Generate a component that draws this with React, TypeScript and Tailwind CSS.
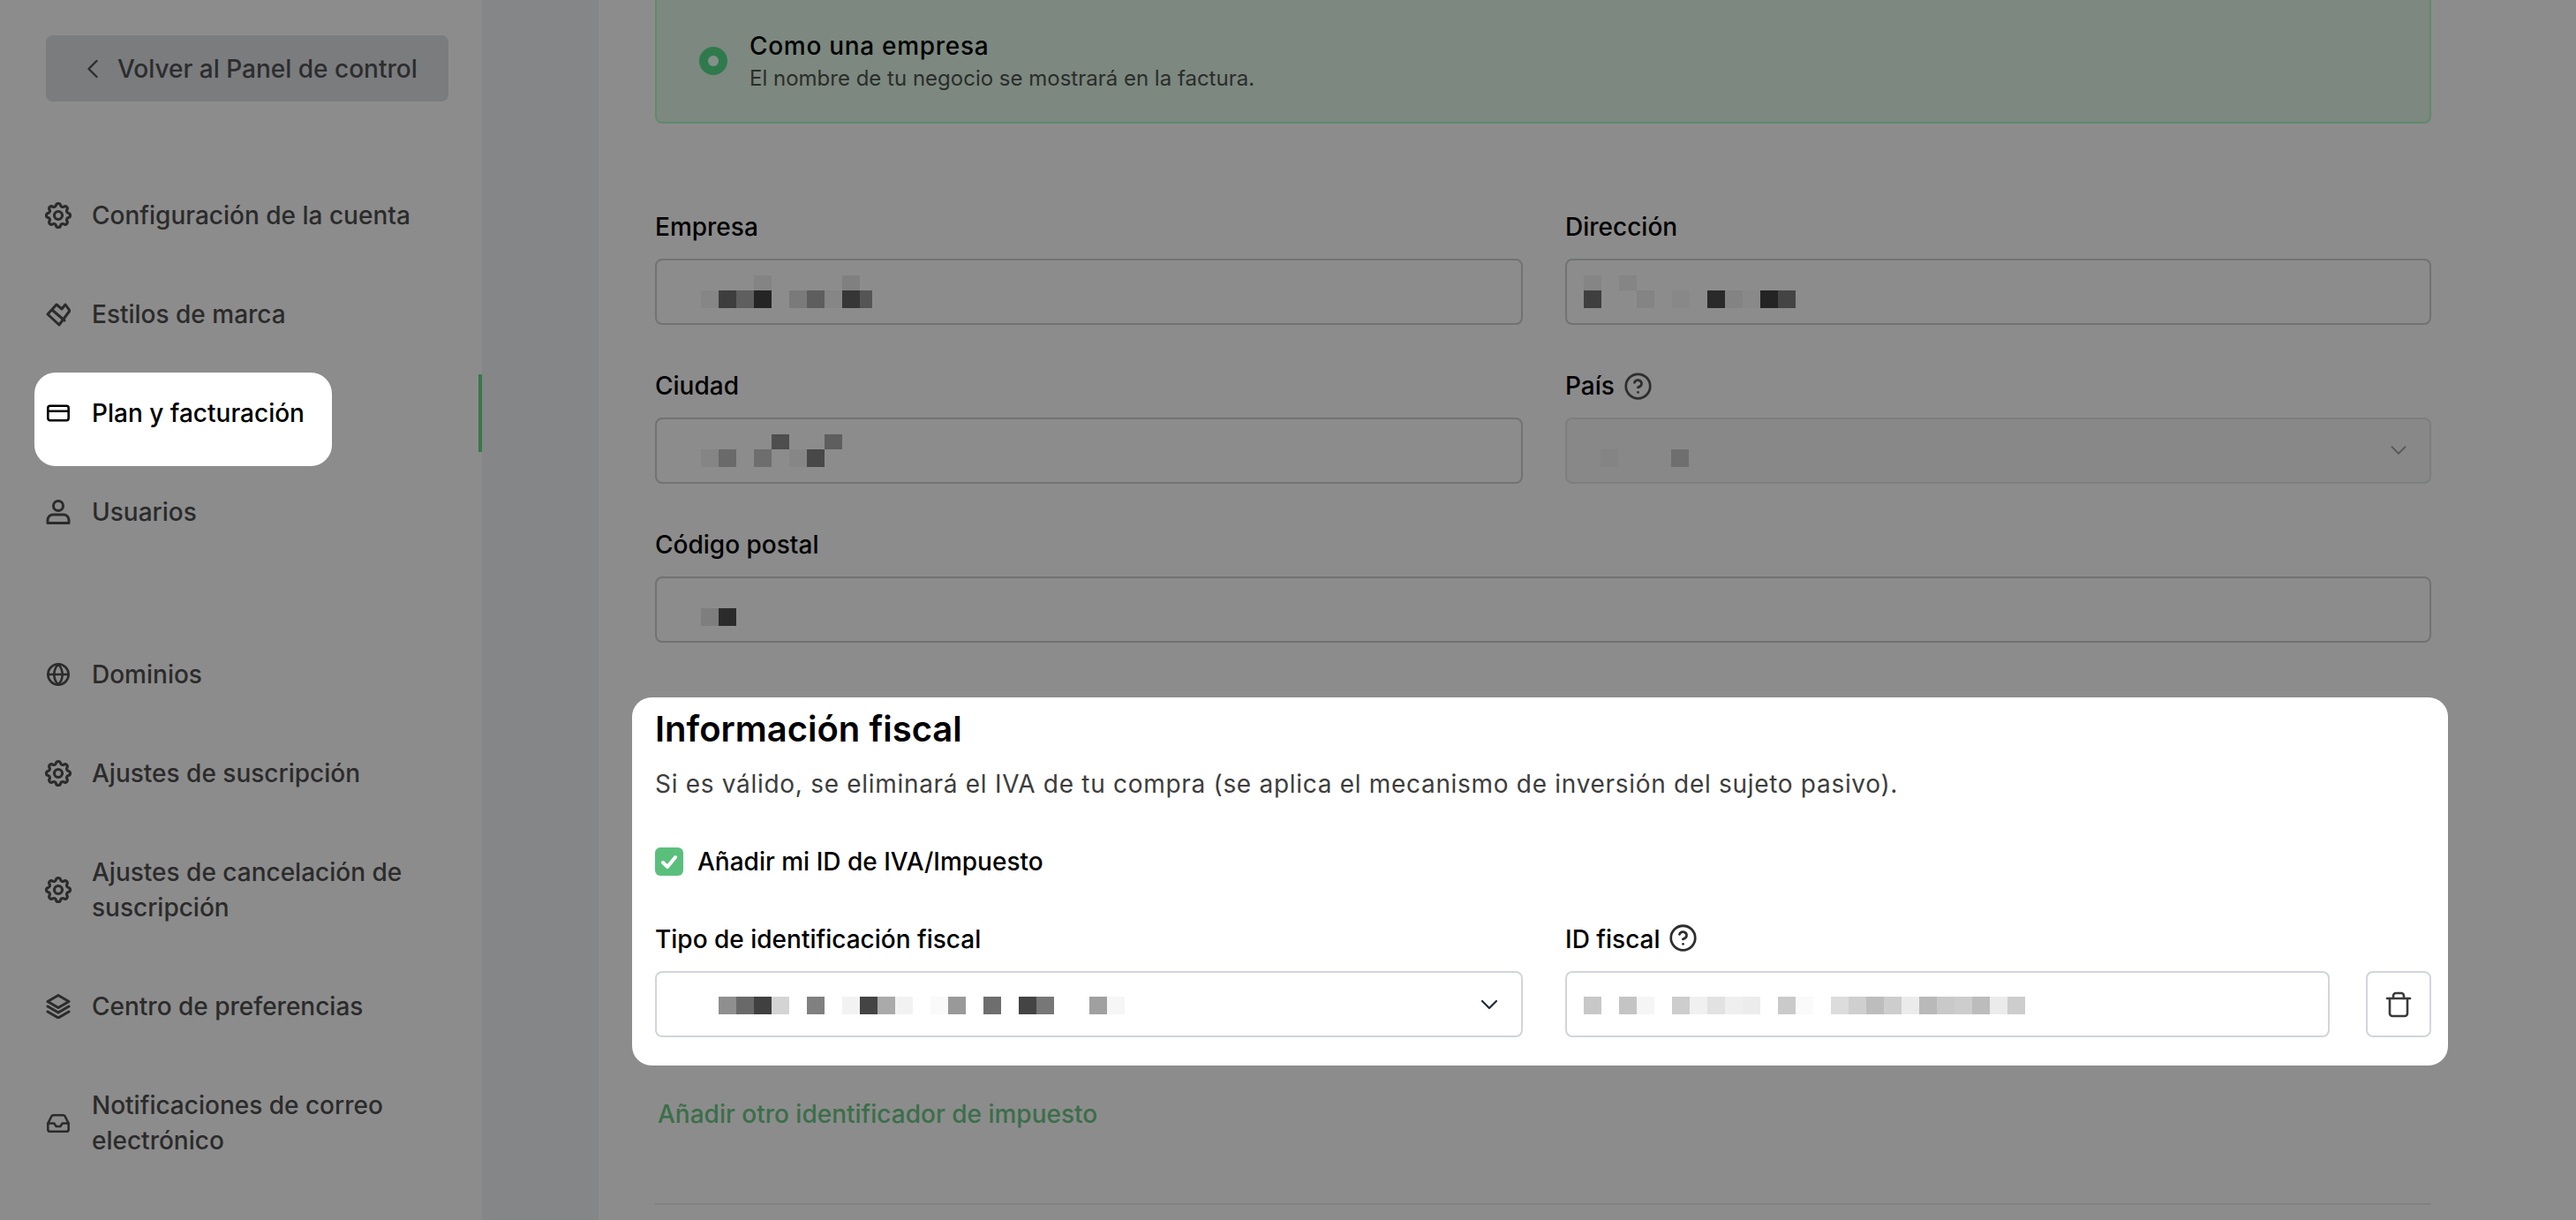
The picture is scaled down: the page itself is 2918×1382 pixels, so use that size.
import { ChevronDown, ChevronLeft, CircleHelp, CreditCard, Globe, Inbox } from "lucide-react";
import { TbSettings } from "react-icons/tb";
import type { ReactNode } from "react";

function Pixels({ rows, className }: { rows: string[][]; className: string }) {
  return (
    <div className={className}>
      {rows.map((row, i) => (
        <div key={i} className={i === rows.length - 1 ? "flex h-[20px]" : "flex h-[17px]"}>
          {row.map((c, j) => (
            <div key={j} className={"w-[20px] " + c} />
          ))}
        </div>
      ))}
    </div>
  );
}

function BrushIcon() {
  return (
    <svg viewBox="0 0 28 28" className="w-[28px] h-[28px]" fill="none" stroke="currentColor" strokeWidth="3" strokeLinejoin="round" strokeLinecap="round">
      <path d="M2 14 L12 3 L18 8 L22 3 L27 10 L15 26 Z" />
      <path d="M7 9 L21 21" />
    </svg>
  );
}

function UserIcon() {
  return (
    <svg viewBox="0 0 28 28" className="w-[28px] h-[28px]" fill="none" stroke="currentColor" strokeWidth="3" strokeLinejoin="round" strokeLinecap="round">
      <circle cx="14" cy="7" r="5.5" />
      <path d="M2 26.5 V23 a6 6 0 0 1 6 -6 h12 a6 6 0 0 1 6 6 v3.5 Z" />
    </svg>
  );
}

function StackIcon() {
  return (
    <svg viewBox="0 0 28 28" className="w-[28px] h-[28px]" fill="none" stroke="currentColor" strokeWidth="3" strokeLinejoin="round" strokeLinecap="round">
      <path d="M14 1.5 L26 8.5 L14 15.5 L2 8.5 Z" />
      <path d="M2 14 L14 21 L26 14" />
      <path d="M2 20 L14 27 L26 20" />
    </svg>
  );
}

function TrashIcon() {
  return (
    <svg viewBox="0 0 30 30" className="w-[30px] h-[30px]" fill="none" stroke="currentColor" strokeWidth="2.6" strokeLinejoin="round" strokeLinecap="round">
      <path d="M2 8 H28" />
      <path d="M9 8 V5 a3 3 0 0 1 3 -3 h6 a3 3 0 0 1 3 3 V8" />
      <path d="M5 8 V25 a3 3 0 0 0 3 3 h14 a3 3 0 0 0 3 -3 V8" />
    </svg>
  );
}

function NavItem({ icon, children, multi }: { icon: ReactNode; children: ReactNode; multi?: boolean }) {
  return (
    <div className="flex items-center gap-[24px] text-[#2b2b2b]">
      <div className="w-[28px] h-[28px] flex items-center justify-center shrink-0">{icon}</div>
      <span className={multi ? "w-[380px] leading-[40px]" : "leading-[40px]"}>{children}</span>
    </div>
  );
}

function Label({ children, className }: { children: ReactNode; className?: string }) {
  return <div className={"h-[36px] flex items-center text-[28px] font-medium text-black " + (className ?? "")}>{children}</div>;
}

const dimInput = "relative h-[75px] rounded-[8px] border-2 border-[#717273]";

export default function App() {
  const gear = <TbSettings size={36} strokeWidth={2.1} className="shrink-0" />;
  return (
    <div className="flex h-screen w-full overflow-hidden bg-[#8c8c8c] font-['Inter',sans-serif]">
      <aside className="relative w-[546px] shrink-0 pl-[52px] pt-[40px] text-[28px]">
        <div className="absolute right-0 top-[424px] h-[88px] w-[4px] bg-[#37784b]" />
        <div className="flex h-[75px] w-[456px] items-center rounded-[8px] bg-[#7b7c7e] pl-[35px] font-medium text-[#2c2d2e] text-[28px]">
          <ChevronLeft size={36} strokeWidth={1.6} className="mr-[10px]" />
          <span>Volver al Panel de control</span>
        </div>
        <nav className="mt-[109px] flex flex-col gap-[72px] font-medium">
          <NavItem icon={gear}>Configuración de la cuenta</NavItem>
          <NavItem icon={<BrushIcon />}>Estilos de marca</NavItem>
          <div className="-ml-[13px] -mt-[26px] -mb-[40px] h-[106px] w-[337px] rounded-[24px] bg-white pl-[13px] pt-[26px] text-black">
            <div className="flex items-center gap-[24px]">
              <div className="w-[28px] h-[28px] flex items-center justify-center shrink-0">
                <CreditCard size={34} strokeWidth={2.2} />
              </div>
              <span className="leading-[40px]">Plan y facturación</span>
            </div>
          </div>
          <NavItem icon={<UserIcon />}>Usuarios</NavItem>
          <div className="mt-[72px]">
            <NavItem icon={<Globe size={34} strokeWidth={2.2} />}>Dominios</NavItem>
          </div>
          <NavItem icon={gear}>Ajustes de suscripción</NavItem>
          <NavItem icon={gear} multi>Ajustes de cancelación de suscripción</NavItem>
          <NavItem icon={<StackIcon />}>Centro de preferencias</NavItem>
          <NavItem icon={<Inbox size={35} strokeWidth={2.2} />} multi>Notificaciones de correo electrónico</NavItem>
        </nav>
      </aside>

      <div className="w-[132px] shrink-0 bg-[#858687]" />

      <main className="flex-1 pl-[64px] pr-[164px]">
        <div className="flex h-[140px] items-center gap-[25px] rounded-b-[8px] border-x-2 border-b-2 border-[#5f8a6c] bg-[#7d8880] pl-[48px]">
          <div className="flex h-[32px] w-[32px] items-center justify-center rounded-full bg-[#2f7a4c]">
            <div className="h-[12px] w-[12px] rounded-full bg-[#84918a]" />
          </div>
          <div className="pt-[2px]">
            <div className="text-[28px] leading-[38px] font-medium tracking-[0.7px] text-black">Como una empresa</div>
            <div className="text-[24px] leading-[36px] text-[#2a2d2b]">El nombre de tu negocio se mostrará en la factura.</div>
          </div>
        </div>

        <div className="mt-[99px] grid grid-cols-[983px_981px] gap-x-[48px]">
          <div>
            <Label>Empresa</Label>
            <div className={"mt-[18px] " + dimInput}>
              <Pixels
                className="absolute left-[50px] top-[17px]"
                rows={[
                  ["", "", "", "bg-[#848484]", "", "", "", "", "bg-[#808080]", ""],
                  ["bg-[#868686]", "bg-[#3e3e3e]", "bg-[#5f5f5f]", "bg-[#252525]", "", "bg-[#7a7a7a]", "bg-[#5e5e5e]", "bg-[#868686]", "bg-[#363636]", "!w-[14px] bg-[#555555]"],
                ]}
              />
            </div>
          </div>
          <div>
            <Label>Dirección</Label>
            <div className={"mt-[18px] " + dimInput}>
              <Pixels
                className="absolute left-[19px] top-[17px]"
                rows={[
                  ["bg-[#858585]", "", "bg-[#858585]"],
                  ["bg-[#3f3f3f]", "", "", "bg-[#848484]", "", "bg-[#888888]", "", "bg-[#2a2a2a]", "bg-[#838383]", "bg-[#898989]", "bg-[#242424]", "bg-[#444444]"],
                ]}
              />
            </div>
          </div>

          <div className="mt-[51px]">
            <Label>Ciudad</Label>
            <div className={"mt-[18px] " + dimInput}>
              <Pixels
                className="absolute left-[50px] top-[17px]"
                rows={[
                  ["", "", "", "", "bg-[#4e4e4e]", "", "", "bg-[#5e5e5e]"],
                  ["bg-[#858585]", "bg-[#6a6a6a]", "", "bg-[#6e6e6e]", "", "bg-[#868686]", "bg-[#484848]", ""],
                ]}
              />
            </div>
          </div>
          <div className="mt-[51px]">
            <Label>
              País
              <CircleHelp size={33} strokeWidth={2} className="ml-[10px] text-[#2e2e2e]" />
            </Label>
            <div className="relative mt-[18px] h-[75px] rounded-[8px] border-2 border-[#7d7e7e] bg-[#888888]">
              <Pixels className="absolute left-[38px] top-[34px]" rows={[["bg-[#848484]", "", "", "", "bg-[#6f6f6f]"]]} />
              <ChevronDown size={30} strokeWidth={1.5} className="absolute right-[20px] top-[20px] text-[#5a5a5a]" />
            </div>
          </div>

          <div className="col-span-2 mt-[51px]">
            <Label>Código postal</Label>
            <div className={"mt-[18px] " + dimInput}>
              <Pixels className="absolute left-[50px] top-[34px]" rows={[["bg-[#7e7e7e]", "bg-[#2b2b2b]"]]} />
            </div>
          </div>
        </div>

        <section className="-ml-[26px] -mr-[19px] mt-[62px] h-[417px] rounded-[22px] bg-white pl-[26px] pr-[19px]">
          <h2 className="pt-[12px] text-[40px] leading-[48px] font-semibold text-black">Información fiscal</h2>
          <p className="mt-[18px] text-[28px] leading-[40px] tracking-[0.7px] text-[#3d3d3d]">
            Si es válido, se eliminará el IVA de tu compra (se aplica el mecanismo de inversión del sujeto pasivo).
          </p>
          <div className="mt-[52px] flex items-center gap-[16px]">
            <div className="flex h-[32px] w-[32px] items-center justify-center rounded-[6px] bg-[#5bbf7c]">
              <svg viewBox="0 0 32 32" className="h-[32px] w-[32px]" fill="none" stroke="white" strokeWidth="4" strokeLinecap="round" strokeLinejoin="round">
                <path d="M9 17 L14 22 L23 11" />
              </svg>
            </div>
            <span className="text-[28px] leading-[32px] font-medium text-black">Añadir mi ID de IVA/Impuesto</span>
          </div>
          <div className="mt-[54px] grid grid-cols-[983px_981px] gap-x-[48px]">
            <div>
              <Label>Tipo de identificación fiscal</Label>
              <div className="relative mt-[18px] h-[75px] rounded-[8px] border-2 border-[#d1d5db]">
                <Pixels
                  className="absolute left-[70px] top-[27px]"
                  rows={[
                    ["bg-[#8f8f8f]", "bg-[#696969]", "bg-[#404040]", "bg-[#d4d4d4]", "", "bg-[#808080]", "", "bg-[#f2f2f2]", "bg-[#444444]", "bg-[#aaaaaa]", "bg-[#f2f2f2]", "", "bg-[#fafafa]", "bg-[#999999]", "", "bg-[#6e6e6e]", "", "bg-[#444444]", "bg-[#777777]", "", "", "bg-[#a0a0a0]", "bg-[#f6f6f6]"],
                  ]}
                />
                <ChevronDown size={32} strokeWidth={1.6} className="absolute right-[20px] top-[20px] text-[#1f2937]" />
              </div>
            </div>
            <div>
              <Label>
                ID fiscal
                <CircleHelp size={33} strokeWidth={2} className="ml-[9px] -mt-[3px] text-[#2e2e2e]" />
              </Label>
              <div className="mt-[18px] flex gap-[41px]">
                <div className="relative h-[75px] flex-1 rounded-[8px] border-2 border-[#d1d5db]">
                  <Pixels
                    className="absolute left-[19px] top-[27px]"
                    rows={[
                      ["bg-[#c8c8c8]", "", "bg-[#c4c4c4]", "bg-[#f5f5f5]", "", "bg-[#cdcdcd]", "bg-[#f0f0f0]", "bg-[#e2e2e2]", "bg-[#efefef]", "bg-[#ececec]", "", "bg-[#cacaca]", "bg-[#fafafa]", "", "bg-[#dcdcdc]", "bg-[#cfcfcf]", "bg-[#bdbdbd]", "bg-[#cdcdcd]", "bg-[#ebebeb]", "bg-[#b9b9b9]", "bg-[#c9c9c9]", "bg-[#cdcdcd]", "bg-[#bcbcbc]", "bg-[#ebebeb]", "bg-[#cdcdcd]"],
                    ]}
                  />
                </div>
                <div className="flex h-[75px] w-[74px] items-center justify-center rounded-[8px] border-2 border-[#d1d5db] text-[#3a3a3a]">
                  <TrashIcon />
                </div>
              </div>
            </div>
          </div>
        </section>

        <div className="mt-[35px] pl-[3px] text-[28px] leading-[40px] font-medium text-[#3b6e4a]">Añadir otro identificador de impuesto</div>
        <div className="mt-[81px] h-[2px] bg-[#808080]" />
      </main>
    </div>
  );
}
